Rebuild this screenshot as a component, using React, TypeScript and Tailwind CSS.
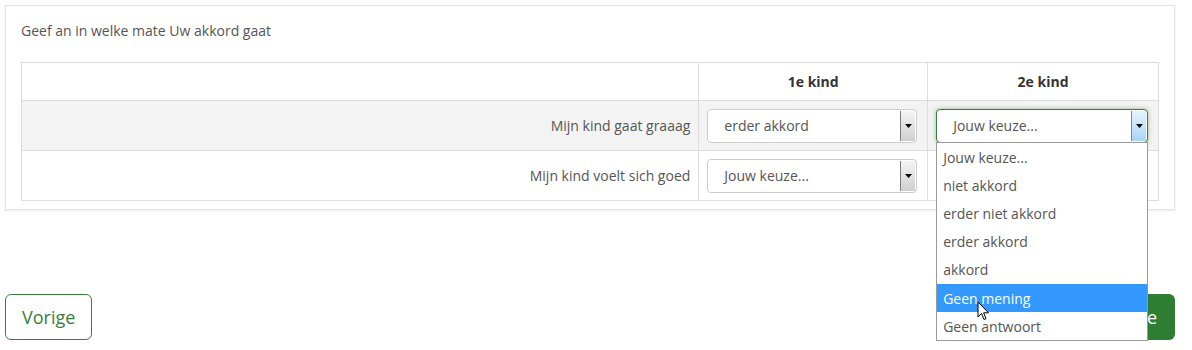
import React from "react";

function Arrow({ active }: { active?: boolean }) {
  return (
    <div
      className={
        "absolute right-[1px] top-[1px] bottom-[1px] w-[15px] flex items-center justify-center border-l " +
        (active
          ? "border-[#6a8fa8] bg-gradient-to-b from-[#e6f3fc] to-[#a9d5f6]"
          : "border-[#7a7a7a] bg-gradient-to-b from-[#f4f4f4] to-[#cfcfcf]")
      }
    >
      <svg width="7" height="4" viewBox="0 0 7 4">
        <polygon points="0,0 7,0 3.5,4" fill="#000" />
      </svg>
    </div>
  );
}

function Select({ value, focused }: { value: string; focused?: boolean }) {
  return (
    <div
      className={
        "relative h-[34px] rounded-[4px] bg-white border flex items-center pl-[16px] text-[14px] text-[#555] " +
        (focused
          ? "border-[#3c7d3c] shadow-[0_0_4px_rgba(60,125,60,0.5)]"
          : "border-[#ccc]")
      }
    >
      <span>{value}</span>
      <Arrow active={focused} />
    </div>
  );
}

const options = [
  "Jouw keuze...",
  "niet akkord",
  "erder niet akkord",
  "erder akkord",
  "akkord",
  "Geen mening",
  "Geen antwoort",
];

export default function App() {
  return (
    <div
      className="w-[1192px] h-[350px] bg-white relative overflow-hidden text-[#555]"
      style={{ fontFamily: '"Open Sans", "Noto Sans", sans-serif' }}
    >
      <div className="w-[1170px] ml-[5px] mt-[5px] border border-[#e3e3e3] shadow-[0_1px_2px_rgba(0,0,0,0.08)] px-[15px] pt-[15px] pb-[8px]">
        <div className="text-[14px] leading-[20px] text-[#555]">
          Geef an in welke mate Uw akkord gaat
        </div>
        <table className="mt-[21px] w-[1138px] border-collapse text-[14px]">
          <colgroup>
            <col className="w-[678px]" />
            <col className="w-[229px]" />
            <col className="w-[231px]" />
          </colgroup>
          <thead>
            <tr className="h-[38px]">
              <th className="border border-[#ddd]"></th>
              <th className="border border-[#ddd] font-bold text-[#333] text-center">1e kind</th>
              <th className="border border-[#ddd] font-bold text-[#333] text-center">2e kind</th>
            </tr>
          </thead>
          <tbody>
            <tr className="h-[50px] bg-[#f3f3f3]">
              <td className="border border-[#ddd] text-right pr-[8px]">Mijn kind gaat graaag</td>
              <td className="border border-[#ddd] pl-[8px] pr-[10px]">
                <Select value="erder akkord" />
              </td>
              <td className="border border-[#ddd] pl-[8px] pr-[10px] relative">
                <Select value="Jouw keuze..." focused />
                <div className="absolute left-[8px] top-[41px] w-[212px] z-10 bg-white border border-[#9a9a9a]">
                  {options.map((o) => (
                    <div
                      key={o}
                      className={
                        "h-[28.2px] flex items-center pl-[6px] text-[14px] " +
                        (o === "Geen mening" ? "bg-[#3399ff] text-white" : "text-[#555]")
                      }
                    >
                      {o}
                    </div>
                  ))}
                </div>
              </td>
            </tr>
            <tr className="h-[50px]">
              <td className="border border-[#ddd] text-right pr-[8px]">Mijn kind voelt sich goed</td>
              <td className="border border-[#ddd] pl-[8px] pr-[10px]">
                <Select value="Jouw keuze..." />
              </td>
              <td className="border border-[#ddd] pl-[8px] pr-[10px]">
                <Select value="" />
              </td>
            </tr>
          </tbody>
        </table>
      </div>
      <div className="w-[1170px] ml-[5px] mt-[84px] flex justify-between">
        <button className="h-[46px] px-[16px] rounded-[6px] border border-[#3c7d3c] text-[#3c7d3c] text-[18px] bg-white">
          Vorige
        </button>
        <button className="h-[46px] px-[18px] rounded-[6px] bg-[#2e7d32] text-white text-[18px]">
          Volgende
        </button>
      </div>
      <svg
        className="absolute left-[977px] top-[301px] z-20"
        width="13"
        height="20"
        viewBox="0 0 13 20"
      >
        <path
          d="M1 1 L1 16 L4.5 12.5 L7 18.5 L9 17.6 L6.6 11.8 L11.5 11.8 Z"
          fill="#fff"
          stroke="#000"
          strokeWidth="1"
          strokeLinejoin="round"
        />
      </svg>
    </div>
  );
}
